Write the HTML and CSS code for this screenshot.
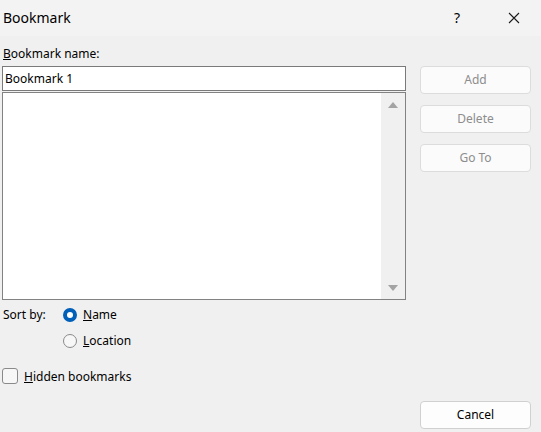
FILE: index.html
```html
<!DOCTYPE html>
<html>
<head>
<meta charset="utf-8">
<link rel="stylesheet" href="styles.css">
</head>
<body>
<div class="dialog">
  <div class="titlebar">
    <div class="title">Bookmark</div>
    <div class="help">?</div>
    <div class="close">
      <svg width="12" height="12" viewBox="0 0 12 12"><path d="M1 1 L11 11 M11 1 L1 11" stroke="#1a1a1a" stroke-width="1.1" fill="none"/></svg>
    </div>
  </div>
  <div class="main">
    <div class="left">
      <div class="label"><u>B</u>ookmark name:</div>
      <div class="input">Bookmark 1</div>
      <div class="list">
        <div class="list-items"></div>
        <div class="scroll">
          <svg class="arrow" width="10" height="6" viewBox="0 0 10 6"><path d="M0 6 L5 0 L10 6 Z" fill="#a3a3a3"/></svg>
          <svg class="arrow" width="10" height="6" viewBox="0 0 10 6"><path d="M0 0 L5 6 L10 0 Z" fill="#a3a3a3"/></svg>
        </div>
      </div>
      <div class="sort">
        <div class="sort-label">Sort by:</div>
        <div class="radios">
          <div class="radio-row"><span class="radio checked"></span><span><u>N</u>ame</span></div>
          <div class="radio-row"><span class="radio"></span><span><u>L</u>ocation</span></div>
        </div>
      </div>
      <div class="check-row"><span class="checkbox"></span><span><u>H</u>idden bookmarks</span></div>
    </div>
    <div class="right">
      <div class="btn disabled">Add</div>
      <div class="btn disabled">Delete</div>
      <div class="btn disabled">Go To</div>
    </div>
  </div>
  <div class="footer">
    <div class="btn">Cancel</div>
  </div>
</div>
</body>
</html>
```
FILE: styles.css
```css
html, body {
  margin: 0;
  padding: 0;
}
body {
  width: 541px;
  height: 432px;
  background: #f0f0f0;
  font-family: "Noto Sans", "Open Sans", sans-serif;
  font-size: 12px;
  color: #000;
  overflow: hidden;
}
.dialog {
  width: 541px;
  height: 432px;
  display: flex;
  flex-direction: column;
}
.titlebar {
  height: 36px;
  background: #f3f3f3;
  display: flex;
  align-items: center;
}
.title {
  flex: 1;
  padding-left: 3px;
  font-size: 14px;
  line-height: 20px;
  padding-bottom: 1px;
}
.help {
  width: 14px;
  font-size: 14px;
  text-align: center;
  margin-right: 44px;
  padding-bottom: 1px;
}
.close {
  width: 12px;
  height: 12px;
  margin-right: 21px;
  display: flex;
}
.main {
  display: flex;
  gap: 14px;
  padding-left: 2px;
}
.left {
  width: 404px;
  display: flex;
  flex-direction: column;
}
.label {
  padding-top: 9px;
  padding-left: 1px;
  line-height: 17px;
  height: 21px;
}
.input {
  height: 23px;
  border: 1px solid #7a7a7a;
  background: #fff;
  line-height: 23px;
  padding-left: 2px;
}
.list {
  margin-top: 1px;
  height: 206px;
  border: 1px solid #828282;
  background: #fff;
  display: flex;
}
.list-items {
  flex: 1;
}
.scroll {
  width: 24px;
  background: #f0f0f0;
  display: flex;
  flex-direction: column;
  justify-content: space-between;
  align-items: center;
  padding: 9px 0 8px;
}
.sort {
  display: flex;
  margin-top: 5px;
}
.sort-label {
  width: 60px;
  padding-left: 1px;
  line-height: 20px;
}
.radios {
  display: flex;
  flex-direction: column;
  gap: 6px;
}
.radio-row {
  display: flex;
  align-items: center;
  gap: 6px;
  height: 20px;
  line-height: 20px;
}
.radio {
  width: 12px;
  height: 12px;
  border: 1px solid #8a8a8a;
  border-radius: 50%;
  background: #f7f7f7;
  box-sizing: content-box;
}
.radio.checked {
  width: 6px;
  height: 6px;
  border: 4px solid #005fb8;
  background: #fff;
}
.check-row {
  display: flex;
  align-items: center;
  gap: 6px;
  margin-top: 15px;
  height: 20px;
}
.checkbox {
  width: 14px;
  height: 14px;
  border: 1px solid #8a8a8a;
  border-radius: 3px;
  background: #f7f7f7;
}
.right {
  width: 111px;
  display: flex;
  flex-direction: column;
  gap: 11px;
  padding-top: 30px;
}
.btn {
  height: 26px;
  width: 109px;
  border: 1px solid #d0d0d0;
  border-radius: 4px;
  background: #fdfdfd;
  text-align: center;
  line-height: 26px;
  color: #000;
}
.btn.disabled {
  color: #8d8d8d;
  background: #fbfbfb;
  border-color: #dcdcdc;
}
.footer {
  display: flex;
  justify-content: flex-end;
  padding-right: 10px;
  margin-top: auto;
  padding-bottom: 3px;
}
```
